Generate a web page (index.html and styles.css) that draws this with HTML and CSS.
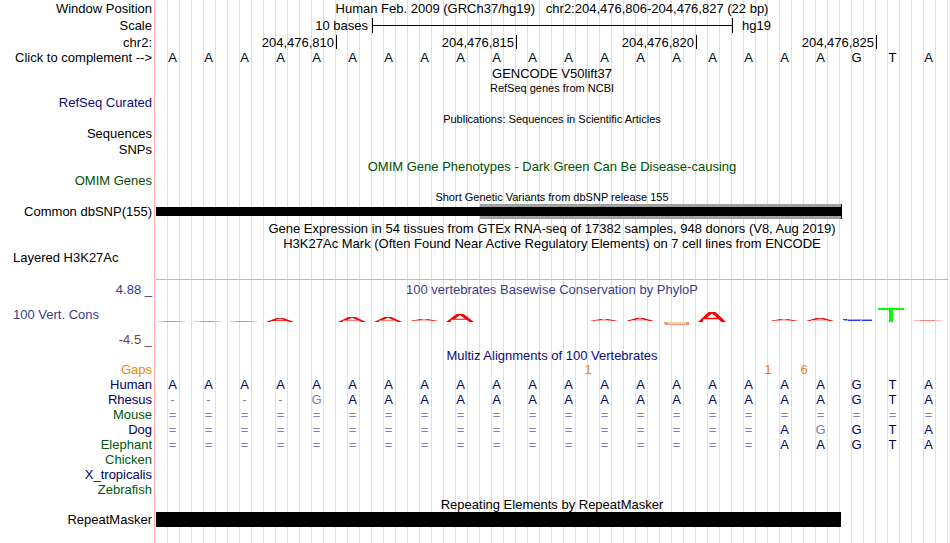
FILE: index.html
```html
<!DOCTYPE html>
<html lang="en">
<head>
<meta charset="utf-8">
<title>Human hg19 chr2:204,476,806-204,476,827</title>
<link rel="stylesheet" href="styles.css">
</head>
<body>
<main class="browser">
  <header class="row tall-16"><div class="label">Window Position</div><h1 class="title">Human Feb. 2009 (GRCh37/hg19) &nbsp; chr2:204,476,806-204,476,827 (22 bp)</h1></header>
  <div class="row tall-18">
    <div class="label">Scale</div>
    <div class="bases ruler">
      <span class="scale-size">10 bases</span><span class="scale-line"></span><span class="scale-name">hg19</span>
    </div>
  </div>
  <div class="row tall-16">
    <div class="label">chr2:</div>
    <div class="bases ruler">
      <span class="tick">204,476,810</span><span class="tick">204,476,815</span><span class="tick">204,476,820</span><span class="tick">204,476,825</span>
    </div>
  </div>
  <div class="row">
    <button class="label" type="button">Click to complement --&gt;</button>
    <div class="bases letters"><span>A</span><span>A</span><span>A</span><span>A</span><span>A</span><span>A</span><span>A</span><span>A</span><span>A</span><span>A</span><span>A</span><span>A</span><span>A</span><span>A</span><span>A</span><span>A</span><span>A</span><span>A</span><span>A</span><span>G</span><span>T</span><span>A</span></div>
  </div>

  <section>
    <div class="row tall-16"><h2 class="title">GENCODE V50lift37</h2></div>
    <div class="row tall-14"><h2 class="title small">RefSeq genes from NCBI</h2></div>
    <div class="row"><div class="label navy">RefSeq Curated</div></div>
  </section>

  <section class="gap-2">
    <div class="row tall-14"><h2 class="title small">Publications: Sequences in Scientific Articles</h2></div>
    <div class="row"><div class="label">Sequences</div></div>
    <div class="row tall-16"><div class="label">SNPs</div></div>
  </section>

  <section class="gap-1">
    <div class="row tall-16"><h2 class="title green">OMIM Gene Phenotypes - Dark Green Can Be Disease-causing</h2></div>
    <div class="row tall-14"><div class="label green">OMIM Genes</div></div>
  </section>

  <section class="gap-2">
    <div class="row tall-14"><h2 class="title small">Short Genetic Variants from dbSNP release 155</h2></div>
    <div class="row">
      <div class="label">Common dbSNP(155)</div>
      <div class="bases"><div class="variant-range"></div><div class="variant"></div></div>
    </div>
  </section>

  <section class="gap-2">
    <div class="row"><h2 class="title">Gene Expression in 54 tissues from GTEx RNA-seq of 17382 samples, 948 donors (V8, Aug 2019)</h2></div>
    <div class="row"><h2 class="title">H3K27Ac Mark (Often Found Near Active Regulatory Elements) on 7 cell lines from ENCODE</h2></div>
    <div class="row tall-14"><div class="label start">Layered H3K27Ac</div></div>
  </section>

  <section class="conservation">
    <div class="row boundary"><span></span></div>
    <div class="row tall-18"><div class="label blue">4.88 _</div><h2 class="title blue">100 vertebrates Basewise Conservation by PhyloP</h2></div>
    <div class="row tall-33">
      <div class="label start blue">100 Vert. Cons</div>
      <svg class="logo" viewBox="0 0 792 33" preserveAspectRatio="none" role="img" aria-label="Conservation by base">
        <defs><path id="peak" fill-rule="evenodd" d="M2 10 12.5 0h7L30 10h-4.500l-3-2.800h-15L6.500 10zM11 5.800h10L16 1.500z"/></defs>
        <g fill="#ffb4b4">
          <path d="M2 23h27v1H2zM38 23h27v1H38zM74 23h27v1H74zM758 22h27v1H758z"/>
          <path fill="#ff8080" d="M8 23h15v1H8zM44 23h15v1H44zM80 23h15v1H80zM764 22h15v1H764z"/>
        </g>
        <g fill="#f00">
          <use href="#peak" transform="translate(108 20) scale(1 .4)"/>
          <use href="#peak" transform="translate(180 19) scale(1 .5)"/>
          <use href="#peak" transform="translate(216 19) scale(1 .5)"/>
          <use href="#peak" transform="translate(252 21) scale(1 .2)"/>
          <use href="#peak" transform="translate(288 16) scale(1 .8)"/>
          <use href="#peak" transform="translate(432 21) scale(1 .2)"/>
          <use href="#peak" transform="translate(468 20) scale(1 .3)"/>
          <use href="#peak" transform="translate(540 14)"/>
          <use href="#peak" transform="translate(612 21) scale(1 .2)"/>
          <use href="#peak" transform="translate(648 20) scale(1 .3)"/>
        </g>
        <path fill="#e0dca8" d="M508 24h26v2h-26z"/><path fill="#c4b850" d="M508 24h4v2h-4zM530 24h3v2h-3z"/><path fill="#ff9090" d="M509 26h24v1h-24z"/>
        <path fill="#a0a0ff" d="M688 21h28v2h-28z"/><path fill="#3030ff" d="M687 21h4v1h-4zM692 22h12v1h-12zM706 22h10v1h-10z"/>
        <path fill="#0f0" d="M722 10h26v2h-11v12h-4V12h-11z"/>
      </svg>
    </div>
    <div class="row tall-16"><div class="label maroon">-4.5 _</div></div>
  </section>

  <section class="gap-1">
    <div class="row"><h2 class="title navy">Multiz Alignments of 100 Vertebrates</h2></div>
    <div class="row tall-14">
      <div class="label orange">Gaps</div>
      <div class="bases gaps"><span class="gap-12">1</span><span class="gap-17">1</span><span class="gap-18">6</span></div>
    </div>
    <table class="alignment">
      <tr><th scope="row">Human<td>A<td>A<td>A<td>A<td>A<td>A<td>A<td>A<td>A<td>A<td>A<td>A<td>A<td>A<td>A<td>A<td>A<td>A<td>A<td>G<td>T<td>A
      <tr><th scope="row">Rhesus<td class="dim">-<td class="dim">-<td class="dim">-<td class="dim">-<td class="dim">G<td>A<td>A<td>A<td>A<td>A<td>A<td>A<td>A<td>A<td>A<td>A<td>A<td>A<td>A<td>G<td>T<td>A
      <tr class="dim"><th scope="row" class="green">Mouse<td>=<td>=<td>=<td>=<td>=<td>=<td>=<td>=<td>=<td>=<td>=<td>=<td>=<td>=<td>=<td>=<td>=<td>=<td>=<td>=<td>=<td>=
      <tr class="dim"><th scope="row">Dog<td>=<td>=<td>=<td>=<td>=<td>=<td>=<td>=<td>=<td>=<td>=<td>=<td>=<td>=<td>=<td>=<td>=<td class="match">A<td>G<td class="match">G<td class="match">T<td class="match">A
      <tr class="dim"><th scope="row" class="green">Elephant<td>=<td>=<td>=<td>=<td>=<td>=<td>=<td>=<td>=<td>=<td>=<td>=<td>=<td>=<td>=<td>=<td>=<td class="match">A<td class="match">A<td class="match">G<td class="match">T<td class="match">A
      <tr><th scope="row" class="green">Chicken<td colspan="22">
      <tr><th scope="row">X_tropicalis<td colspan="22">
      <tr><th scope="row" class="green">Zebrafish<td colspan="22">
    </table>
  </section>

  <section class="gap-1">
    <div class="row tall-14"><h2 class="title">Repeating Elements by RepeatMasker</h2></div>
    <div class="row">
      <div class="label">RepeatMasker</div>
      <div class="bases"><div class="repeat"></div></div>
    </div>
  </section>
</main>
</body>
</html>
```
FILE: styles.css
```css
:root {
  --label-width: 156px;
  --navy: #000064;
}

* { box-sizing: border-box; }

body {
  margin: 0;
  background: #fff;
  color: #000;
  font: 13px/15px "Liberation Sans", Arial, sans-serif;
}

.browser {
  position: relative;
  z-index: 0;
  min-height: 100vh;
  padding-right: 2px;
}

/* Guide lines: three per base, behind every track */
.browser::before {
  content: "";
  position: absolute;
  z-index: -1;
  inset: 0 2px 0 var(--label-width);
  background: linear-gradient(to left, #dcdcf8 1px, transparent 1px) 0 0 / calc(100% / 66) 100%;
}

.browser::after {
  content: "";
  position: absolute;
  inset: 0 auto 0 154px;
  width: 1px;
  background: #ffaaaa;
}

.row {
  display: grid;
  grid-template-columns: var(--label-width) minmax(0, 1fr);
  align-items: center;
  height: 15px;
}

.tall-14 { height: 14px; line-height: 14px; }
.tall-16 { height: 16px; }
.tall-18 { height: 18px; }
.tall-33 { height: 33px; }
.gap-1 { padding-top: 1px; }
.gap-2 { padding-top: 2px; }

.label {
  grid-column: 1;
  padding: 0 4px 0 0;
  border: 0;
  background: none;
  color: inherit;
  font: inherit;
  text-align: right;
  white-space: nowrap;
}

.label.start {
  padding-left: 13px;
  text-align: left;
}

button.label { cursor: pointer; }

.title {
  grid-column: 2;
  margin: 0;
  font-size: 13px;
  font-weight: 400;
  text-align: center;
  white-space: nowrap;
}

.title.small { font-size: 11px; }

.row .navy { color: #0c0c78; }
.row .blue { color: #3c3c8c; }
.row .maroon { color: #823c3c; }
.row .orange, .row .gaps { color: #e68a0a; }
.row .green { color: #005000; }

.bases {
  grid-column: 2;
  display: grid;
  grid-template-columns: repeat(22, minmax(0, 1fr));
  align-items: center;
  height: 100%;
}

.letters span {
  padding-right: 3px;
  text-align: center;
}

.ruler span { white-space: nowrap; }

.scale-size {
  grid-column: 1 / 7;
  padding-right: 4px;
  text-align: right;
}

.scale-line {
  grid-column: 7 / 17;
  height: 15px;
  margin-right: -1px;
  border: solid #000;
  border-width: 0 1px;
  background: linear-gradient(#000, #000) center / 100% 1px no-repeat;
}

.scale-name {
  grid-column: 17 / 20;
  padding-left: 10px;
}

.tick {
  grid-column: span 5;
  height: 14px;
  margin-right: -1px;
  padding-right: 2px;
  border-right: 1px solid #000;
  text-align: right;
}

.variant-range {
  grid-area: 1 / 10 / 2 / 20;
  height: 15px;
  margin-right: -2px;
  border-right: 1px solid #000;
  background: #a0a0a0;
}

.variant {
  grid-area: 1 / 1 / 2 / 20;
  height: 9px;
  margin-right: -1px;
  background: #000;
}

.repeat {
  grid-column: 1 / 20;
  height: 15px;
  margin-right: -1px;
  background: #000;
}

.conservation { padding-top: 14px; }
.boundary { height: 1px; }

.boundary span {
  grid-column: 2;
  height: 1px;
  background: #78dcc8;
}

.logo {
  display: block;
  width: 100%;
  height: 33px;
}

/* Insertions sit on the boundary between two bases */
.gaps {
  margin: 0 calc(100% / 44) 0 calc(-100% / 44);
  text-align: center;
}

.gap-12 { grid-column: 13; }
.gap-17 { grid-column: 18; }
.gap-18 { grid-column: 19; }

.alignment {
  width: 100%;
  table-layout: fixed;
  border-collapse: collapse;
  color: var(--navy);
}

.alignment th {
  width: var(--label-width);
  padding: 0 4px 0 0;
  color: var(--navy);
  font-weight: 400;
  text-align: right;
}

.alignment th.green { color: #005a0a; }

.alignment td {
  height: 15px;
  padding: 0 3px 0 0;
  text-align: center;
}

.alignment .dim { color: #8080b4; }
.alignment .match { color: var(--navy); }
```
